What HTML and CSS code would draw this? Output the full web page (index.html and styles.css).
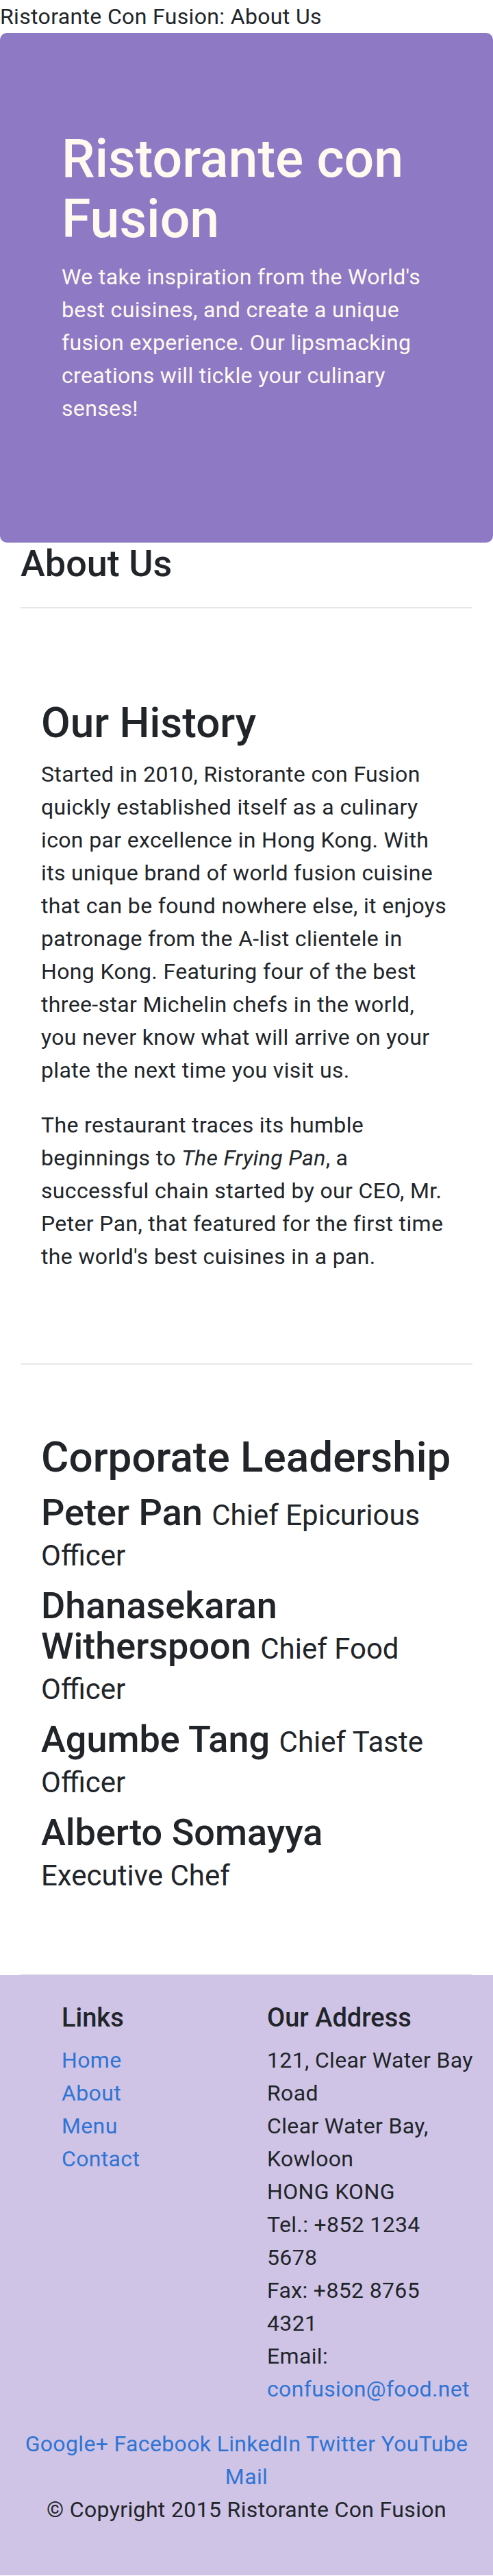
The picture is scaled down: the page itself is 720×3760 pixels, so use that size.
FILE: index.html
```html
<!DOCTYPE html>
<html lang="en">
<head>
<meta charset="utf-8">
<title>Ristorante Con Fusion: About Us</title>
<link rel="stylesheet" href="styles.css">
</head>
<body>
<div class="page-title">Ristorante Con Fusion: About Us</div>

<header class="jumbotron">
  <div class="jumbo-inner">
    <h1 class="brand">Ristorante con Fusion</h1>
    <p class="lead">We take inspiration from the World's best cuisines, and create a unique fusion experience. Our lipsmacking creations will tickle your culinary senses!</p>
  </div>
</header>

<main class="container">
  <div class="page-head">
    <h3 class="page-heading">About Us</h3>
    <hr class="rule">
  </div>

  <section class="row-content">
    <h2 class="section-title">Our History</h2>
    <p class="text">Started in 2010, Ristorante con Fusion quickly established itself as a culinary icon par excellence in Hong Kong. With its unique brand of world fusion cuisine that can be found nowhere else, it enjoys patronage from the A-list clientele in Hong Kong. Featuring four of the best three-star Michelin chefs in the world, you never know what will arrive on your plate the next time you visit us.</p>
    <p class="text">The restaurant traces its humble beginnings to <em>The Frying Pan</em>, a successful chain started by our CEO, Mr. Peter Pan, that featured for the first time the world's best cuisines in a pan.</p>
  </section>

  <section class="row-content">
    <h2 class="section-title">Corporate Leadership</h2>
    <h3 class="leader">Peter Pan <small class="role">Chief Epicurious Officer</small></h3>
    <h3 class="leader">Dhanasekaran Witherspoon <small class="role">Chief Food Officer</small></h3>
    <h3 class="leader">Agumbe Tang <small class="role">Chief Taste Officer</small></h3>
    <h3 class="leader">Alberto Somayya <small class="role">Executive Chef</small></h3>
  </section>
</main>

<footer class="footer">
  <div class="footer-cols">
    <div class="links-col">
      <h5 class="footer-heading">Links</h5>
      <ul class="link-list">
        <li><a class="link" href="#">Home</a></li>
        <li><a class="link" href="#">About</a></li>
        <li><a class="link" href="#">Menu</a></li>
        <li><a class="link" href="#">Contact</a></li>
      </ul>
    </div>
    <div class="address-col">
      <h5 class="footer-heading">Our Address</h5>
      <address class="address">
        121, Clear Water Bay<br>
        Road<br>
        Clear Water Bay,<br>
        Kowloon<br>
        HONG KONG<br>
        Tel.: +852 1234<br>
        5678<br>
        Fax: +852 8765<br>
        4321<br>
        Email:<br>
        <a class="link" href="#">confusion@food.net</a>
      </address>
    </div>
  </div>
  <div class="social">
    <a class="link" href="#">Google+</a>
    <a class="link" href="#">Facebook</a>
    <a class="link" href="#">LinkedIn</a>
    <a class="link" href="#">Twitter</a>
    <a class="link" href="#">YouTube</a>
    <a class="link" href="#">Mail</a>
  </div>
  <p class="copyright">© Copyright 2015 Ristorante Con Fusion</p>
</footer>
</body>
</html>
```

FILE: styles.css
```css
html, body {
  margin: 0;
  padding: 0;
}

body {
  font-family: Roboto, "Noto Sans", "Liberation Sans", sans-serif;
  font-size: 32px;
  letter-spacing: 0.35px;
  line-height: 48px;
  color: #212529;
  background: #ffffff;
}

.page-title {
  margin: 0;
}

.jumbotron {
  background: #8e79c5;
  color: #fffaf0;
  border-radius: 10px;
  padding: 140px 60px;
}

.jumbo-inner {
  padding: 0 30px;
}

.brand {
  font-size: 77px;
  line-height: 88px;
  font-weight: 500;
  letter-spacing: 0;
  margin: 0 0 16px;
}

.lead {
  margin: 0 0 32px;
}

.container {
  padding: 0 30px;
}

.page-heading {
  font-size: 54px;
  line-height: 62px;
  font-weight: 500;
  letter-spacing: 0;
  margin: 0 0 16px;
}

.rule {
  border: 0;
  border-top: 2px solid #e6e6e6;
  margin: 32px 0;
  height: 0;
}

.row-content {
  padding: 100px 30px;
  border-bottom: 2px solid #e8e8e8;
}

.section-title {
  font-size: 62px;
  line-height: 70px;
  font-weight: 500;
  letter-spacing: 0;
  margin: 0 0 16px;
}

.text {
  margin: 0 0 32px;
}

.leader {
  font-size: 54px;
  line-height: 59px;
  font-weight: 500;
  letter-spacing: 0;
  margin: 0 0 18px;
}

.role {
  font-size: 42px;
  line-height: 46px;
  font-weight: 400;
}

.footer {
  background: #cfc4e6;
  padding: 40px 0;
}

.footer-cols {
  display: grid;
  grid-template-columns: 300px 305px;
  padding: 0 0 0 90px;
}

.footer-heading {
  font-size: 38px;
  line-height: 44px;
  font-weight: 500;
  letter-spacing: 0;
  margin: 0 0 16px;
}

.link-list {
  list-style: none;
  margin: 0;
  padding: 0;
}

.address {
  font-style: normal;
  white-space: nowrap;
  margin: 0 0 32px;
}

.link {
  color: #2f74d4;
  text-decoration: none;
}

.social {
  padding: 0 30px;
  text-align: center;
}

.copyright {
  text-align: center;
  margin: 0 0 32px;
}
```
